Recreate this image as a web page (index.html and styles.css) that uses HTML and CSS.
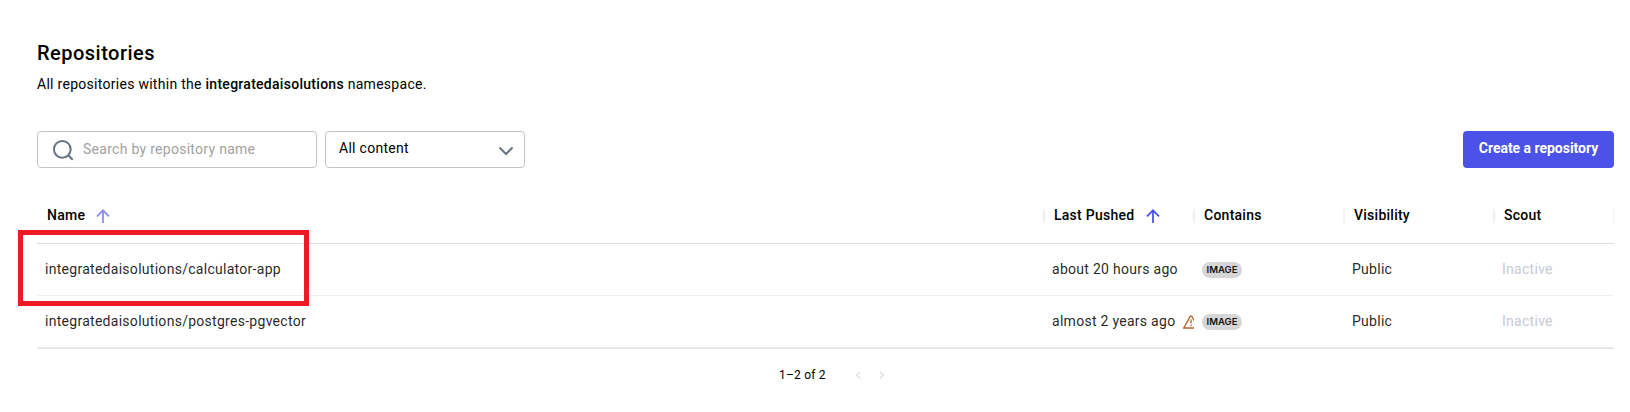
FILE: index.html
```html
<!DOCTYPE html>
<html lang="en">
<head>
<meta charset="utf-8">
<title>Repositories</title>
<link rel="stylesheet" href="styles.css">
</head>
<body>
<main class="page">
  <h1 class="title">Repositories</h1>
  <p class="subtitle">All repositories within the <strong>integratedaisolutions</strong> namespace.</p>

  <div class="toolbar">
    <div class="search">
      <svg class="search-icon" width="22" height="22" viewBox="0 0 22 22"><circle cx="10.300" cy="10.300" r="8.400"/><path d="M16 16l4.700 4.700"/></svg>
      <span class="placeholder">Search by repository name</span>
    </div>
    <div class="select">
      <span>All content</span>
      <svg class="chevron" width="16" height="10" viewBox="0 0 16 10"><path d="M1.5 1.5L8 8l6.500-6.500"/></svg>
    </div>
    <button class="create">Create a repository</button>
  </div>

  <div class="table">
    <div class="row head">
      <div class="cell">Name <svg class="arrow faded" width="14" height="14" viewBox="0 0 14 14"><path d="M7 14V1.500M1 7.300L7 1.300l6 6"/></svg></div>
      <div class="cell">Last Pushed <svg class="arrow pushed" width="14" height="14" viewBox="0 0 14 14"><path d="M7 14V1.500M1 7.300L7 1.300l6 6"/></svg></div>
      <div class="cell">Contains</div>
      <div class="cell">Visibility</div>
      <div class="cell">Scout</div>
    </div>
    <div class="row">
      <div class="cell">integratedaisolutions/calculator-app</div>
      <div class="cell">about 20 hours ago</div>
      <div class="cell"><span class="chip">IMAGE</span></div>
      <div class="cell">Public</div>
      <div class="cell inactive">Inactive</div>
      <div class="highlight"></div>
    </div>
    <div class="row">
      <div class="cell">integratedaisolutions/postgres-pgvector</div>
      <div class="cell clip">almost 2 years ago <svg class="warning" width="16" height="14" viewBox="0 0 16 14"><path d="M7.300 1.200h1.400L15.200 13H.8z"/><path d="M8 4.500v4M8 9.700v1.600"/></svg></div>
      <div class="cell"><span class="chip">IMAGE</span></div>
      <div class="cell">Public</div>
      <div class="cell inactive">Inactive</div>
    </div>
  </div>

  <div class="pager">
    <span class="range">1–2 of 2</span>
    <svg class="page-arrow" width="6" height="8" viewBox="0 0 6 8"><path d="M5 .7L1.500 4 5 7.300"/></svg>
    <svg class="page-arrow" width="6" height="8" viewBox="0 0 6 8"><path d="M1 .7L4.500 4 1 7.300"/></svg>
  </div>
</main>
</body>
</html>
```
FILE: styles.css
```css
* { box-sizing: border-box; }
body {
  margin: 0;
  background: #fff;
  color: #000;
  font: 14px/20px Roboto, sans-serif;
  letter-spacing: 0.28px;
}
svg { display: block; flex: none; fill: none; }
.page { padding: 38px 16px 0 37px; }
.title {
  margin: 0;
  font-size: 20px;
  font-weight: 500;
  line-height: 30px;
  letter-spacing: 0.48px;
}
.subtitle { margin: 6px 0 0; }
.subtitle strong { font-weight: 500; }

.toolbar { display: flex; gap: 8px; margin-top: 37px; }
.search, .select {
  display: flex;
  align-items: center;
  height: 37px;
  border: 1px solid #c4c4c4;
  border-radius: 4px;
}
.search { width: 280px; padding: 0 0 2px 14px; }
.search-icon { stroke: #677285; stroke-width: 2; margin-top: 2px; }
.placeholder { margin-left: 9px; color: #a2a2a2; }
.select {
  width: 200px;
  justify-content: space-between;
  padding: 0 10px 3px 13px;
}
.chevron { stroke: #677285; stroke-width: 2; margin-top: 5px; }
.create {
  width: 151px;
  height: 37px;
  margin-left: auto;
  padding: 0 0 3px;
  border: 0;
  border-radius: 4px;
  background: #4c52e8;
  color: #fff;
  font: 700 14px/20px Roboto, sans-serif;
  letter-spacing: -0.03px;
}

.table { margin-top: 19px; border-bottom: 1px solid #e0e0e0; }
.row {
  position: relative;
  display: grid;
  grid-template-columns: 1fr 150px 150px 150px 120px;
  height: 52px;
  border-bottom: 1px solid #f0f0f0;
  color: rgba(0, 0, 0, 0.87);
}
.cell {
  display: flex;
  align-items: center;
  padding: 0 8px 1px;
  white-space: nowrap;
}
.head {
  height: 57px;
  border-bottom: 1px solid #e0e0e0;
  color: #000;
  font-weight: 500;
  letter-spacing: 0.25px;
}
.head .cell {
  padding: 0 0 1px 10px;
  background: linear-gradient(#f0f0f0, #f0f0f0) right 22px / 1px 14px no-repeat;
}
.head .cell + .cell {
  background:
    linear-gradient(#f0f0f0, #f0f0f0) left 22px / 1px 14px no-repeat,
    linear-gradient(#f0f0f0, #f0f0f0) right 22px / 1px 14px no-repeat;
}
.arrow { stroke: #4c52e8; stroke-width: 1.8; margin: 2px 0 0 11px; }
.pushed { margin-left: 12px; }
.faded { opacity: 0.65; }
.clip { overflow: hidden; }
.warning { stroke: #b0642a; stroke-width: 1.3; margin: 2px 0 0 8px; }
.chip {
  width: 40px;
  height: 16px;
  margin-top: 2px;
  border-radius: 8px;
  background: #d6d6d6;
  color: #111;
  font-family: Inter, Roboto, sans-serif;
  font-size: 9.5px;
  font-weight: 600;
  letter-spacing: 0;
  line-height: 16px;
  text-align: center;
}
.inactive { color: #c8cad4; }
.highlight {
  position: absolute;
  left: -19px;
  top: -14px;
  width: 291px;
  height: 76px;
  border: 5px solid #ed1c24;
  z-index: 1;
}

.pager {
  display: flex;
  align-items: center;
  margin: 16px 0 0 742px;
  font-size: 12px;
  letter-spacing: 0.2px;
}
.page-arrow { stroke: #dcdcdc; stroke-width: 1.2; }
.range + .page-arrow { margin: 0 18px 0 29px; }
```
